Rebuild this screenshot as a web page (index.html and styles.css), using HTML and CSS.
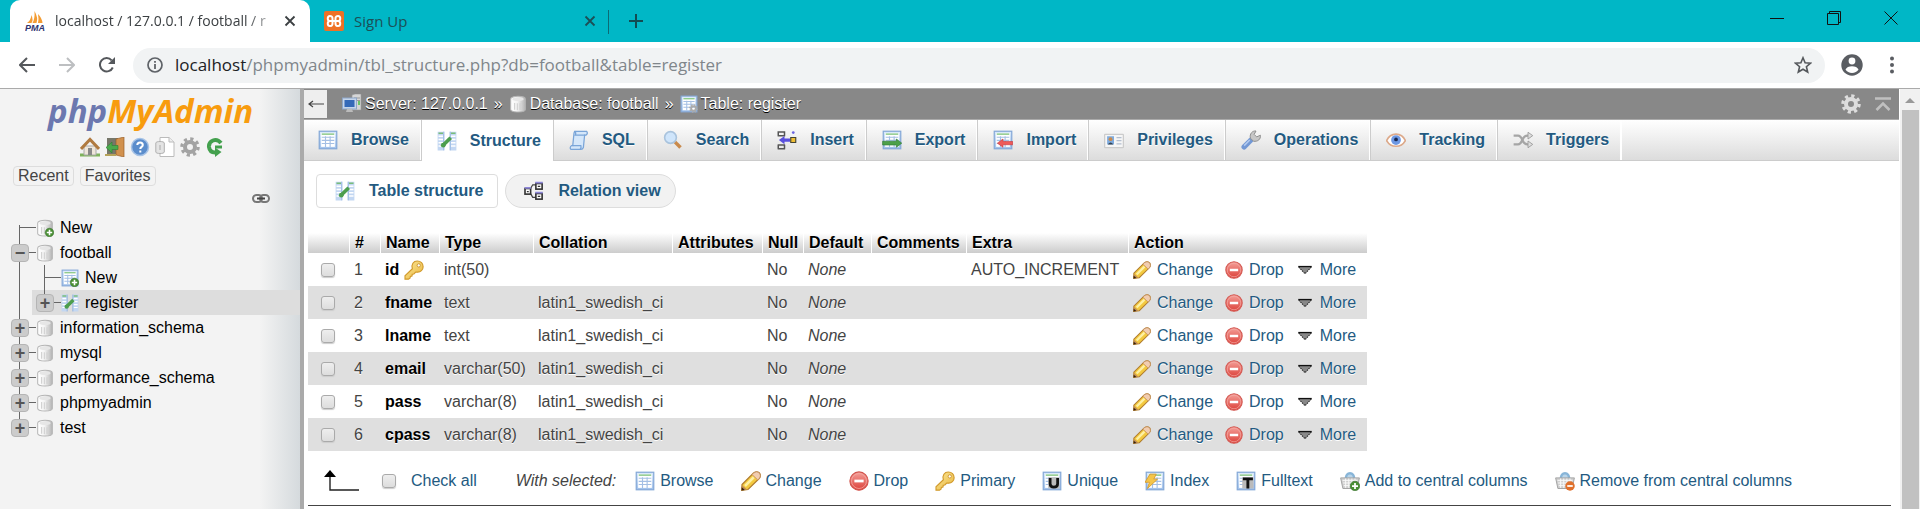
FILE: index.html
```html
<!DOCTYPE html>
<html lang="en">
<head>
<meta charset="utf-8">
<title>localhost / 127.0.0.1 / football / register</title>
<link rel="stylesheet" href="styles.css">
</head>
<body>
<svg class="defs" aria-hidden="true">
  <defs>
    <linearGradient id="g-cyl" x1="0" x2="1"><stop offset="0" stop-color="#fff"/><stop offset=".45" stop-color="#f4f4f4"/><stop offset="1" stop-color="#b4b4b4"/></linearGradient>
    <linearGradient id="g-blue" x1="0" y1="0" x2="0" y2="1"><stop offset="0" stop-color="#dcebfb"/><stop offset="1" stop-color="#9fc0ea"/></linearGradient>
    <linearGradient id="g-red" x1="0" y1="0" x2="0" y2="1"><stop offset="0" stop-color="#f4a09a"/><stop offset="1" stop-color="#dc4038"/></linearGradient>
    <linearGradient id="g-gold" x1="0" y1="0" x2="1" y2="1"><stop offset="0" stop-color="#fbe89a"/><stop offset="1" stop-color="#e9b53c"/></linearGradient>
    <symbol id="i-plus" viewBox="0 0 16 16"><circle cx="12" cy="12" r="3.8" fill="#4a8f34" stroke="#35702a" stroke-width=".5"/><path d="M12 9.600v4.800M9.600 12h4.800" stroke="#fff" stroke-width="1.400"/></symbol>
    <symbol id="i-db" viewBox="0 0 16 16"><path d="M1.500 3.500C1.500.4 14.500.4 14.500 3.500v9.400c0 3-13 3-13 0z" fill="url(#g-cyl)" stroke="#b5b5b5" stroke-width=".9"/><ellipse cx="8" cy="3.700" rx="5" ry="1.700" fill="#e6e6e6"/><path d="M5 7v6M7.400 7.300v6.200M9.800 7.300v6" stroke="#d0d0d0"/></symbol>
    <symbol id="i-table" viewBox="0 0 16 16"><rect x="1" y="1" width="14" height="14" fill="url(#g-blue)" stroke="#86a9d8"/><rect x="2.500" y="2.500" width="11" height="11" fill="#fff"/><path d="M3 3.300h10" stroke="#8cc98a" stroke-width="1.200"/><path d="M3 5.800h10M3 8.300h10M3 10.800h10M6 5v8.500M9.700 5v8.500" stroke="#a4bfe4" stroke-width=".9"/></symbol>
    <symbol id="i-struct" viewBox="0 0 16 16"><path d="M.5.5h5v15h-5zM10.500.5h5v15h-5z" fill="#c3d7f2"/><path d="M1.200 1.800h3.600M11.200 1.800h3.600" stroke="#79bd7a" stroke-width="1.200"/><path d="M1.200 4.200h3.600M1.200 6.800h3.600M1.200 9.400h3.600M1.200 12h3.600M11.200 4.200h3.600M11.200 6.800h3.600M11.200 9.400h3.600M11.200 12h3.600" stroke="#fff" stroke-width="1.100"/><path d="M5.500.5v15M10.500.5v15" stroke="#8fb1df" stroke-width=".8"/><path d="M4.800 11.400 11 5.400" stroke="#4c9e4e" stroke-width="3"/><circle cx="5" cy="11.300" r="1.900" fill="#4c9e4e"/></symbol>
    <symbol id="i-key" viewBox="0 0 16 16"><path d="M10.600.8c2.800 0 4.800 2 4.700 4.600 0 2.600-2 4.400-4.600 4.300l-1.300-.1-1.500 1.600-1.300.2-.2 1.500-1.300.3-.3 1.400-1.200.7H.8v-2.700l5.900-5.600C5.600 3.500 7.600.8 10.600.8z" fill="url(#g-gold)" stroke="#d19a2c" stroke-width=".9"/><circle cx="11.800" cy="4.300" r="1.300" fill="#fff" stroke="#c98f2a" stroke-width=".7"/></symbol>
    <symbol id="i-pencil" viewBox="0 0 16 16"><path d="M.8 10.800 10 1.600Q12.600-.3 14.800 1.600 16.400 4 14.600 6L5.600 14.800.5 15.500z" fill="#f3c93f" stroke="#b07c2e" stroke-width=".9"/><path d="m10 1.600q2.600-1.900 4.800 0 1.600 2.400-.2 4.400l-1.200 1.100-4.600-4.300z" fill="#f1cdb0" stroke="#c08a5c" stroke-width=".6"/><path d="m3.200 12 7-7" stroke="#fdf0a4" stroke-width="2"/><path d="M.8 11.300 4.800 14.800.5 15.500z" fill="#c08c55"/><path d="m.6 13 2.400 2.200-2.500.4z" fill="#33220f"/></symbol>
    <symbol id="i-drop" viewBox="0 0 16 16"><circle cx="8" cy="8" r="7.300" fill="url(#g-red)" stroke="#d2564f" stroke-width=".9"/><circle cx="8" cy="8" r="6" fill="none" stroke="#f3aaa4" stroke-width=".6"/><path d="M4.300 8h7.400" stroke="#fff" stroke-width="2.200"/></symbol>
    <symbol id="i-more" viewBox="0 0 16 16"><path d="M2.500 5.500h11L8 11.300z" fill="#888"/><path d="M2 5h12" stroke="#111" stroke-width="1.300"/><path d="M2.500 5.500 8 11.300l5.500-5.800" fill="none" stroke="#222" stroke-dasharray="1.300 .8" stroke-width=".9"/></symbol>
    <symbol id="i-gear" viewBox="0 0 16 16"><circle cx="8" cy="8" r="6.500" fill="none" stroke="currentColor" stroke-width="2.600" stroke-dasharray="2.550 2.550"/><circle cx="8" cy="8" r="4" fill="none" stroke="currentColor" stroke-width="3.200"/></symbol>
    <symbol id="i-basket" viewBox="0 0 16 16"><path d="M4.500 7C4.500 0 11.500 0 11.500 7" fill="#b9d5ea" stroke="#88b5d8" stroke-width="2"/><path d="M.5 5.500h15l-1.800 8.500H2.300z" fill="#cfcfcf" stroke="#a5a5a5" stroke-width=".8"/><path d="M2 7.500h12M2.500 9.600h11M3 11.700h10M4.500 6v7.500M7 6v7.500M9.500 6v7.500M12 6v7.500" stroke="#f8f8f8" stroke-width=".8"/></symbol>
    <symbol id="i-x" viewBox="0 0 16 16"><path d="m3.500 3.500 9 9m0-9-9 9" stroke="currentColor" stroke-width="1.800"/></symbol>
  </defs>
</svg>

<header class="browser">
  <div class="tabstrip">
    <div class="tab tab-active">
      <svg class="favicon" viewBox="0 0 20 20"><path d="M2 12q4-3 4.500-8 2 5 0 8zM7.500 12q2.500-4 2-12 4 7 2 12zM13 12q1-4 0-9 4 4 4.500 9z" fill="#f39c33"/><text x="0" y="19.500" class="pma">PMA</text></svg>
      <span class="tab-title">localhost / 127.0.0.1 / football / r</span>
      <button class="plain close" aria-label="Close tab"><svg class="ic16"><use href="#i-x"/></svg></button>
    </div>
    <div class="tab tab-rest">
      <svg class="favicon" viewBox="0 0 20 20"><rect width="20" height="20" rx="2" fill="#ef7125"/><path d="M7 10H6C3 10 3 5 6 5s2.500 2.500 2.500 5S9 15 6 15s-3-5 0-5h8c3 0 3-5 0-5s-2.500 2.500-2.500 5-.5 5 2.500 5 3-5 0-5" fill="none" stroke="#fff" stroke-width="2"/></svg>
      <span class="tab-title">Sign Up</span>
      <button class="plain close" aria-label="Close tab"><svg class="ic16"><use href="#i-x"/></svg></button>
    </div>
    <button class="plain newtab" aria-label="New tab"><svg class="ic16" viewBox="0 0 16 16"><path d="M8 1v14M1 8h14" stroke="#124c53" stroke-width="2"/></svg></button>
    <div class="winctl">
      <button class="plain" aria-label="Minimize"><svg class="ic14" viewBox="0 0 14 14"><path d="M0 7.500h14" stroke="#111"/></svg></button>
      <button class="plain" aria-label="Restore"><svg class="ic14" viewBox="0 0 14 14"><path d="M.5 2.500h11v11H.500zM2.500 2.500v-2h11V11.500h-2" fill="none" stroke="#111"/></svg></button>
      <button class="plain" aria-label="Close"><svg class="ic14" viewBox="0 0 14 14"><path d="m.5.5 13 13m0-13-13 13" stroke="#111"/></svg></button>
    </div>
  </div>
  <div class="toolbar">
    <div class="navbtns">
      <button class="plain" aria-label="Back"><svg class="ic16" viewBox="0 0 16 16"><path d="M16 8H1M8 1 1 8l7 7" fill="none" stroke="#55585c" stroke-width="2"/></svg></button>
      <button class="plain" aria-label="Forward"><svg class="ic16" viewBox="0 0 16 16"><path d="M0 8h15M8 1l7 7-7 7" fill="none" stroke="#bdbfc1" stroke-width="2"/></svg></button>
      <button class="plain" aria-label="Reload"><svg class="ic16" viewBox="0 0 16 16"><path d="M13.800 10.500A6.700 6.700 0 1 1 12.700 3.300" fill="none" stroke="#55585c" stroke-width="2"/><path d="M16 0v7H9z" fill="#55585c"/></svg></button>
    </div>
    <div class="omnibox">
      <svg class="ic16" viewBox="0 0 16 16"><circle cx="8" cy="8" r="7" fill="none" stroke="#5f6368" stroke-width="1.700"/><path d="M8 7v5M8 4v1.800" stroke="#5f6368" stroke-width="1.800"/></svg>
      <span class="url"><b>localhost</b>/phpmyadmin/tbl_structure.php?db=football&amp;table=register</span>
      <button class="plain" aria-label="Bookmark"><svg class="ic18" viewBox="0 0 18 18"><path d="m9 1.800 2.100 5 5.400.4-4.100 3.500 1.300 5.300L9 13.200 4.300 16l1.300-5.300-4.100-3.500 5.400-.4z" fill="none" stroke="#55585c" stroke-width="1.600"/></svg></button>
    </div>
    <button class="plain" aria-label="Profile"><svg class="ic22" viewBox="0 0 22 22"><circle cx="11" cy="11" r="10.700" fill="#5a5d62"/><circle cx="11" cy="7" r="3.400" fill="#fff"/><path d="M4.500 15.500c1.500-4.500 11.500-4.500 13 0-2.500 4.500-10.500 4.500-13 0z" fill="#fff"/></svg></button>
    <button class="plain dots" aria-label="Menu"><svg class="ic18" viewBox="0 0 18 18"><g fill="#5a5d62"><circle cx="9" cy="2.500" r="2"/><circle cx="9" cy="9" r="2"/><circle cx="9" cy="15.500" r="2"/></g></svg></button>
  </div>
</header>

<div class="page">
  <aside class="sidebar">
    <div class="logo"><span class="logo-php">php</span><span class="logo-ma">MyAdmin</span></div>
    <nav class="quick">
      <a href="#" aria-label="Home"><svg class="ic20" viewBox="0 0 20 20"><path d="M0 18h20" stroke="#7eb35c" stroke-width="3"/><path d="M4 9h12v9H4z" fill="#eee6da" stroke="#aaa"/><path d="M8 11h4v7H8z" fill="#888"/><path d="m1 12 9-9.500L19 12" fill="none" stroke="#b07a40" stroke-width="3"/></svg></a>
      <a href="#" aria-label="Log out"><svg class="ic20" viewBox="0 0 20 20"><path d="M2 1h11v16H2z" fill="#77776a"/><path d="M11 2l8-2v20l-8-2z" fill="#d1914e" stroke="#99602a" stroke-width=".7"/><path d="M0 17h11v2H0z" fill="#b6a35b"/><path d="M1 10.500 7 5v3.500h6v4H7V16z" fill="#4aaa4c" stroke="#2d7d34" stroke-width=".6"/></svg></a>
      <a href="#" aria-label="Documentation"><svg class="ic20" viewBox="0 0 20 20"><circle cx="10" cy="10" r="8.500" fill="#5b8dcc" stroke="#a7c3e6" stroke-width="1.500"/><path d="M7.300 8c0-3.500 5.500-3.500 5.500 0 0 2-2.500 1.800-2.500 4M10.300 13.500v2" fill="none" stroke="#fff" stroke-width="2"/></svg></a>
      <a href="#" aria-label="phpMyAdmin docs"><svg class="ic20" viewBox="0 0 20 20"><path d="M5 .5h9l5 4.500v14.500H5z" fill="#fff" stroke="#bbb"/><path d="M14 .5V5h5" fill="#eee" stroke="#bbb"/><path d="M.8 6c0-2 8.500-2 8.500 0v9c0 2-8.500 2-8.500 0z" fill="#e4e4e4" stroke="#b0b0b0"/><path d="M5 8v5" stroke="#aaa"/></svg></a>
      <a href="#" class="gear-side" aria-label="Settings"><svg class="ic20"><use href="#i-gear"/></svg></a>
      <a href="#" aria-label="Reload"><svg class="ic20" viewBox="0 0 20 20"><path d="M16 6C11 0 3.500 4 4 10c.5 3.500 3 5.500 6 5.500" fill="none" stroke="#43a04d" stroke-width="4"/><path d="M10 10.500 16.500 15 10 20z" fill="#43a04d"/><path d="M10 10h7" stroke="#43a04d" stroke-width="3"/></svg></a>
    </nav>
    <div class="recents"><button class="pill">Recent</button><button class="pill">Favorites</button></div>
    <div class="linkrow"><svg class="chain" viewBox="0 0 18 10"><rect x="1" y="1" width="9" height="7" rx="3.500" fill="none" stroke="#777" stroke-width="2"/><rect x="8" y="1" width="9" height="7" rx="3.500" fill="none" stroke="#777" stroke-width="2"/><path d="M5 4.500h8" stroke="#444" stroke-width="2"/></svg></div>
    <ul class="tree">
      <li class="leaf first"><span class="node"><i class="elbow"></i><svg class="ic18"><use href="#i-db"/><use href="#i-plus"/></svg><a href="#">New</a></span></li>
      <li><span class="node"><button class="toggle" aria-label="Collapse">−</button><i class="dash"></i><svg class="ic18"><use href="#i-db"/></svg><a href="#">football</a></span>
        <ul class="subtree">
          <li class="leaf"><span class="node"><i class="elbow"></i><svg class="ic18"><use href="#i-table"/><use href="#i-plus"/></svg><a href="#">New</a></span></li>
          <li class="current"><span class="node"><button class="toggle" aria-label="Expand">+</button><i class="dash"></i><svg class="ic18"><use href="#i-struct"/></svg><a href="#">register</a></span></li>
        </ul>
      </li>
      <li><span class="node"><button class="toggle" aria-label="Expand">+</button><i class="dash"></i><svg class="ic18"><use href="#i-db"/></svg><a href="#">information_schema</a></span></li>
      <li><span class="node"><button class="toggle" aria-label="Expand">+</button><i class="dash"></i><svg class="ic18"><use href="#i-db"/></svg><a href="#">mysql</a></span></li>
      <li><span class="node"><button class="toggle" aria-label="Expand">+</button><i class="dash"></i><svg class="ic18"><use href="#i-db"/></svg><a href="#">performance_schema</a></span></li>
      <li><span class="node"><button class="toggle" aria-label="Expand">+</button><i class="dash"></i><svg class="ic18"><use href="#i-db"/></svg><a href="#">phpmyadmin</a></span></li>
      <li class="last"><span class="node"><button class="toggle" aria-label="Expand">+</button><i class="dash"></i><svg class="ic18"><use href="#i-db"/></svg><a href="#">test</a></span></li>
    </ul>
  </aside>

  <main class="main">
    <div class="crumbs">
      <button class="collapse" aria-label="Hide panel"><svg class="ic16" viewBox="0 0 16 16"><path d="M1 8h15M5 5 1 8l4 3" fill="none" stroke="#444" stroke-width="1.200"/></svg></button>
      <svg class="ic20 crumb-server" viewBox="0 0 20 20"><path d="M10 1l3-1h6v16h-9z" fill="#d6d6d6" stroke="#999" stroke-width=".6"/><path d="M12 4h6M12 6.500h6" stroke="#999"/><rect x=".5" y="4" width="14" height="11" fill="#c5d5ea" stroke="#8ea6c8"/><rect x="2.500" y="6" width="10" height="7" fill="#3469b8"/><path d="M5 15h5l1 3H4z" fill="#bbb"/><path d="M17 7v4" stroke="#4b4" stroke-width="1.500"/></svg>
      <a href="#">Server: 127.0.0.1</a><span class="sep">»</span>
      <svg class="ic18"><use href="#i-db"/></svg>
      <a href="#">Database: football</a><span class="sep">»</span>
      <svg class="ic18"><use href="#i-table"/><svg x="9" y="9" width="9" height="9" color="#aaa"><use href="#i-gear"/></svg></svg>
      <a href="#">Table: register</a>
      <span class="crumb-tools"><button class="plain gear-top" aria-label="Page settings"><svg class="ic20"><use href="#i-gear"/></svg></button><button class="plain" aria-label="Back to top"><svg class="ic16" viewBox="0 0 16 16"><path d="M0 2.500h16M1.500 14 8 7.500l6.500 6.500" fill="none" stroke="#c0c0c0" stroke-width="2.600"/></svg></button></span>
    </div>
    <nav class="tabs">
      <a href="#"><svg class="ic20"><use href="#i-table"/></svg>Browse</a>
      <a href="#" class="on"><svg class="ic20"><use href="#i-struct"/></svg>Structure</a>
      <a href="#"><svg class="ic20" viewBox="0 0 16 16"><path d="M4.500 1h9.500q1.500 1.500-.3 3H12.500L11.500 14q-.5 1.500-2 1.500H1.500Q.2 14 2 12.500h1L4 2.500z" fill="#d5e7fa" stroke="#7aa5d8"/><path d="M4.500 1Q6 2.500 5 4h8M3 12.500h6.500q.5 1.500-.5 3" fill="none" stroke="#7aa5d8"/></svg>SQL</a>
      <a href="#"><svg class="ic20" viewBox="0 0 16 16"><path d="m9.500 9.500 4.500 4.500" stroke="#c98a4c" stroke-width="2.800"/><circle cx="6" cy="6" r="4.700" fill="#cfe5fb" stroke="#a9c3dd" stroke-width="1.300"/></svg>Search</a>
      <a href="#"><svg class="ic20" viewBox="0 0 16 16"><path d="M.5 1.500h6M.5 4.500h6M.5 12h6M.5 15h6M1 1v3.500M6 1v3.500M1 12v3M6 12v3" stroke="#555" stroke-width="1.200"/><path d="M1.500 8 6 4.800v2h4.500v2.600H6v2z" fill="#5a50dd"/><path d="M11 6h4v4h-4z" fill="#efbe34" stroke="#443" stroke-width=".9"/><circle cx="13" cy="2" r="1.100" fill="#6a64e0"/></svg>Insert</a>
      <a href="#"><svg class="ic20" viewBox="0 0 16 16"><use href="#i-table"/><path d="M.5 9h11V7.200l4.300 3.300-4.300 3.300V12H.500z" fill="#4ca04a" stroke="#2f7a32" stroke-width=".5"/></svg>Export</a>
      <a href="#"><svg class="ic20" viewBox="0 0 16 16"><use href="#i-table"/><path d="M15.800 9.200H8V7.200l-4.500 3.300L8 13.800v-2h7.800z" fill="#ee5a5a" stroke="#c63a3f" stroke-width=".5"/></svg>Import</a>
      <a href="#"><svg class="ic20" viewBox="0 0 16 16"><rect x=".5" y="3.500" width="15" height="10.500" rx=".5" fill="#f6f6f6" stroke="#ccc"/><rect x="2.500" y="5" width="5.500" height="6.500" fill="#7eaadd"/><circle cx="5.200" cy="7.300" r="1.500" fill="#c98a4c"/><path d="M3 11.500q2.200-3 4.500 0z" fill="#345"/><path d="M10 6h4M10 8.500h4M10 11h4" stroke="#b4bfd0"/></svg>Privileges</a>
      <a href="#"><svg class="ic20" viewBox="0 0 16 16"><path d="M8 8 2.500 13.500" stroke="#7398d4" stroke-width="4.200" stroke-linecap="round"/><path d="M7.500 6.500C6.800 3 9 .5 12 .8L10.500 3.500l2 2 3-1.300c.5 3-2 5.300-5.500 4.800z" fill="#c7c7c7" stroke="#8f8f8f" stroke-width=".8"/><path d="M2.500 12.500 7 8" stroke="#b3cbf0" stroke-width="1.200"/></svg>Operations</a>
      <a href="#"><svg class="ic20" viewBox="0 0 16 16"><path d="M.5 8.500C3.500 1.500 12.500 1.500 15.500 8.500 12 14.500 4 14.500.5 8.500z" fill="#fff" stroke="#dca98a" stroke-width="1.300"/><circle cx="8" cy="8" r="3.900" fill="#6d98e4"/><circle cx="8" cy="7.500" r="1.500" fill="#182850"/></svg>Tracking</a>
      <a href="#"><svg class="ic20" viewBox="0 0 16 16"><path d="M.5 4.500h3.500q2 0 3.500 3.500t4 3.500H13M.5 11.500h3.500q2 0 3.500-3.500t4-3.500H13" fill="none" stroke="#a5a5a5" stroke-width="1.800"/><path d="m12 1.800 3.800 2.700L12 7.200zM12 8.800l3.800 2.700-3.800 2.700z" fill="#ddd" stroke="#999" stroke-width=".7"/></svg>Triggers</a>
    </nav>
    <nav class="subtabs">
      <a href="#" class="sub-on"><svg class="ic20"><use href="#i-struct"/></svg>Table structure</a>
      <a href="#"><svg class="ic20" viewBox="0 0 16 16"><path d="M4 8 7 3h3M4 8l3 5h3" fill="none" stroke="#444"/><g fill="#fff" stroke="#333" stroke-width="1.300"><rect x=".8" y="6" width="4.500" height="4.500"/><rect x="9.500" y="2" width="5" height="4.500"/><rect x="9.500" y="10" width="5" height="4.500"/></g><path d="M11 4.300h2M11 12.300h2M2.300 8.500h1.500" stroke="#333"/><path d="M9 1.300h6M9 9.300h6M.5 5.500h5" stroke="#8d86d8" stroke-width="1.500"/></svg>Relation view</a>
    </nav>

    <table class="cols">
      <colgroup><col class="w-check"><col class="w-num"><col class="w-name"><col class="w-type"><col class="w-coll"><col class="w-attr"><col class="w-null"><col class="w-def"><col class="w-comm"><col class="w-extra"><col class="w-act"></colgroup>
      <thead><tr><th></th><th>#</th><th>Name</th><th>Type</th><th>Collation</th><th>Attributes</th><th>Null</th><th>Default</th><th>Comments</th><th>Extra</th><th>Action</th></tr></thead>
      <tbody>
        <tr><td><input type="checkbox" aria-label="Select id"></td><td>1</td><th scope="row"><span class="pk">id <svg class="ic20"><use href="#i-key"/></svg></span></th><td>int(50)</td><td></td><td></td><td>No</td><td><em>None</em></td><td></td><td>AUTO_INCREMENT</td><td><div class="acts"><a href="#"><svg class="ic18"><use href="#i-pencil"/></svg>Change</a><a href="#"><svg class="ic18"><use href="#i-drop"/></svg>Drop</a><a href="#"><svg class="ic18"><use href="#i-more"/></svg>More</a></div></td></tr>
        <tr><td><input type="checkbox" aria-label="Select fname"></td><td>2</td><th scope="row">fname</th><td>text</td><td>latin1_swedish_ci</td><td></td><td>No</td><td><em>None</em></td><td></td><td></td><td><div class="acts"><a href="#"><svg class="ic18"><use href="#i-pencil"/></svg>Change</a><a href="#"><svg class="ic18"><use href="#i-drop"/></svg>Drop</a><a href="#"><svg class="ic18"><use href="#i-more"/></svg>More</a></div></td></tr>
        <tr><td><input type="checkbox" aria-label="Select lname"></td><td>3</td><th scope="row">lname</th><td>text</td><td>latin1_swedish_ci</td><td></td><td>No</td><td><em>None</em></td><td></td><td></td><td><div class="acts"><a href="#"><svg class="ic18"><use href="#i-pencil"/></svg>Change</a><a href="#"><svg class="ic18"><use href="#i-drop"/></svg>Drop</a><a href="#"><svg class="ic18"><use href="#i-more"/></svg>More</a></div></td></tr>
        <tr><td><input type="checkbox" aria-label="Select email"></td><td>4</td><th scope="row">email</th><td>varchar(50)</td><td>latin1_swedish_ci</td><td></td><td>No</td><td><em>None</em></td><td></td><td></td><td><div class="acts"><a href="#"><svg class="ic18"><use href="#i-pencil"/></svg>Change</a><a href="#"><svg class="ic18"><use href="#i-drop"/></svg>Drop</a><a href="#"><svg class="ic18"><use href="#i-more"/></svg>More</a></div></td></tr>
        <tr><td><input type="checkbox" aria-label="Select pass"></td><td>5</td><th scope="row">pass</th><td>varchar(8)</td><td>latin1_swedish_ci</td><td></td><td>No</td><td><em>None</em></td><td></td><td></td><td><div class="acts"><a href="#"><svg class="ic18"><use href="#i-pencil"/></svg>Change</a><a href="#"><svg class="ic18"><use href="#i-drop"/></svg>Drop</a><a href="#"><svg class="ic18"><use href="#i-more"/></svg>More</a></div></td></tr>
        <tr><td><input type="checkbox" aria-label="Select cpass"></td><td>6</td><th scope="row">cpass</th><td>varchar(8)</td><td>latin1_swedish_ci</td><td></td><td>No</td><td><em>None</em></td><td></td><td></td><td><div class="acts"><a href="#"><svg class="ic18"><use href="#i-pencil"/></svg>Change</a><a href="#"><svg class="ic18"><use href="#i-drop"/></svg>Drop</a><a href="#"><svg class="ic18"><use href="#i-more"/></svg>More</a></div></td></tr>
      </tbody>
    </table>

    <div class="bulk">
      <svg class="uparrow" viewBox="0 0 38 22"><path d="M7 3v17h29" fill="none" stroke="#222" stroke-width="1.400"/><path d="m1 7 6-7 6 7z" fill="#000"/></svg>
      <input type="checkbox" id="checkall"><label for="checkall">Check all</label>
      <em>With selected:</em>
      <div class="bulk-acts">
        <button class="plain"><svg class="ic20"><use href="#i-table"/></svg>Browse</button>
        <button class="plain"><svg class="ic20"><use href="#i-pencil"/></svg>Change</button>
        <button class="plain"><svg class="ic20"><use href="#i-drop"/></svg>Drop</button>
        <button class="plain"><svg class="ic20"><use href="#i-key"/></svg>Primary</button>
        <button class="plain"><svg class="ic20" viewBox="0 0 16 16"><use href="#i-table"/><path d="M5 5h9v9H5z" fill="#bbb"/><path d="M6.500 5.500v4.700q0 2.700 3 2.700t3-2.700V5.500" fill="none" stroke="#111" stroke-width="2.200"/></svg>Unique</button>
        <button class="plain"><svg class="ic20" viewBox="0 0 16 16"><use href="#i-table"/><path d="M4 2.500h5L7 6.500h3L2 14l1.500-5H0z" fill="#f5c54a" stroke="#d59c2c" stroke-width=".7"/></svg>Index</button>
        <button class="plain"><svg class="ic20" viewBox="0 0 16 16"><use href="#i-table"/><path d="M5 5h9v9H5z" fill="#bbb"/><path d="M5.500 6.300h8M9.500 6v8" stroke="#111" stroke-width="2.300"/></svg>Fulltext</button>
        <button class="plain"><svg class="ic20"><use href="#i-basket"/><use href="#i-plus"/></svg>Add to central columns</button>
        <button class="plain"><svg class="ic20" viewBox="0 0 16 16"><use href="#i-basket"/><circle cx="12" cy="12" r="3.800" fill="#e0702c"/><path d="M9.800 12h4.400" stroke="#fff" stroke-width="1.400"/></svg>Remove from central columns</button>
      </div>
    </div>
    <hr class="rule">
  </main>
  <div class="scroll"><span class="scroll-up"></span><span class="scroll-thumb"></span></div>
</div>
</body>
</html>
```
FILE: styles.css
```css
* { box-sizing: border-box; }
body { margin: 0; padding: 0 6px 11px 0; background: #fff; color: #444; font: 16px/20px "Liberation Sans", Arial, sans-serif; }
a { color: #235a81; text-decoration: none; }
svg { display: block; flex: none; }
.defs { position: absolute; width: 0; height: 0; }
.ic14 { width: 14px; height: 14px; }
.ic16 { width: 16px; height: 16px; }
.ic18 { width: 18px; height: 18px; }
.ic20 { width: 20px; height: 20px; }
.ic22 { width: 22px; height: 22px; }
.plain { display: flex; align-items: center; border: 0; padding: 0; background: none; font: inherit; color: inherit; }

/* browser frame */
.browser { font-family: "Open Sans", "Noto Sans", sans-serif; border-bottom: 1px solid #aaa; }
.tabstrip { display: flex; height: 42px; padding-left: 10px; background: #00b7c6; color: #1c4f56; }
.tab { display: flex; align-items: center; gap: 10px; width: 300px; padding: 0 12px 0 15px; font-size: 15px; white-space: nowrap; }
.tab-active { background: #fff; border-radius: 10px 10px 0 0; color: #3c4043; font-size: 14px; }
.tab-active .tab-title { -webkit-mask-image: linear-gradient(90deg, #000 190px, transparent 230px); mask-image: linear-gradient(90deg, #000 190px, transparent 230px); }
.tab-rest { position: relative; padding-left: 14px; }
.tab-rest::after { content: ""; position: absolute; right: 1px; top: 10px; height: 24px; border-right: 1px solid #0d6a74; }
.tab-title { flex: 1; min-width: 0; }
.favicon { width: 20px; height: 20px; }
.pma { font: italic bold 9px "Liberation Sans", Arial, sans-serif; fill: #2d3470; }
.newtab { margin-left: 18px; }
.winctl { display: flex; gap: 43px; margin-left: auto; padding: 0 22px 6px 0; }
.toolbar { display: flex; align-items: center; gap: 16px; height: 46px; padding: 0 19px; }
.navbtns { display: flex; gap: 24px; }
.omnibox { display: flex; align-items: center; flex: 1; gap: 12px; height: 35px; margin-left: 2px; padding: 0 13px 0 14px; border-radius: 18px; background: #f1f3f4; }
.url { flex: 1; color: #80868b; font-size: 17px; }
.url b { font-weight: normal; color: #202124; }
.dots { margin-left: 4px; }

/* page frame */
.page { display: flex; align-items: stretch; }
.sidebar { width: 304px; flex: none; border-right: 4px solid #aaa; background: linear-gradient(90deg, #f3f3f3 260px, #d5dadd 300px); }
.logo { padding: 7px 0 0 48px; font: italic bold 33px/30px "Open Sans", sans-serif; white-space: nowrap; }
.logo-php { color: #6c78af; }
.logo-ma { color: #f89c0e; }
.quick { display: flex; gap: 5px; padding: 11px 0 0 80px; }
.gear-side { color: #a3a3a3; }
.recents { display: flex; gap: 6px; padding: 9px 0 0 13px; }
.pill { padding: 0 4px; border: 1px solid #ddd; border-radius: 4px; background: none; color: #444; font: inherit; line-height: 18px; }
.linkrow { display: flex; justify-content: flex-end; padding: 8px 30px 0 0; }
.chain { width: 18px; height: 10px; }
.tree, .subtree { margin: 0; padding: 0; list-style: none; }
.tree { padding: 11px 0 0 11px; }
.tree > li, .subtree > li { background: linear-gradient(#666, #666) 8px 0 / 1px 100% no-repeat; }
.tree > .first { background-position: 8px 100%; background-size: 1px 15px; }
.tree > .last { background-size: 1px 12px; }
.node { display: flex; align-items: center; height: 25px; }
.tree a { color: #000; margin-left: 6px; }
.subtree { padding-left: 25px; }
.elbow { width: 17px; margin-left: 8px; border-top: 1px solid #666; }
.dash { width: 7px; border-top: 1px solid #666; }
.toggle { width: 18px; height: 18px; padding: 0; border: 1px solid #b5b5b5; border-radius: 4px; background: #ccc; color: #555; font: bold 18px/14px "Liberation Sans", Arial, sans-serif; }
.subtree > .current { margin-left: -4px; padding-left: 4px; background: linear-gradient(#666, #666) 12px 0 / 1px 6px no-repeat, #ddd; }

/* server / database / table trail */
.main { flex: 1; min-width: 0; }
.crumbs { display: flex; align-items: center; height: 31px; background: #888; color: #fff; text-shadow: 0 1px 0 #000; border-bottom: 1px solid #aaa; }
.crumbs a { color: #fff; margin-left: 3px; }
.collapse { display: grid; place-items: center; width: 23px; height: 28px; padding: 0; border: 0; background: #eee; }
.crumb-server { margin-left: 15px; }
.sep { margin: 0 6px; }
.crumb-tools { display: flex; align-items: center; gap: 14px; margin-left: auto; padding-right: 8px; }
.gear-top { color: #ddd; }

/* tabs */
.tabs { display: flex; height: 41px; background: linear-gradient(#fff, #dcdcdc); border-bottom: 1px solid #ccc; }
.tabs a { display: flex; align-items: center; gap: 13px; padding: 0 11px 0 15px; border-left: 1px solid #ccc; border-right: 1px solid #fff; font-weight: bold; text-shadow: 0 1px 0 #fff; }
.tabs a:first-child { border-left: 0; padding-left: 14px; }
.tabs .on { background: #fff; margin-bottom: -1px; }
.tabs a:last-child { border-right-width: 2px; }
.subtabs { display: flex; gap: 7px; padding: 13px 12px 0; }
.subtabs a { display: flex; align-items: center; gap: 14px; height: 34px; padding: 0 14px 0 18px; border: 1px solid #ddd; border-radius: 17px; background: #f2f2f2; font-weight: bold; }
.subtabs .sub-on { border-radius: 4px; background: #fff; }

/* column list */
.cols { margin: 25px 0 0 4px; border-collapse: separate; border-spacing: 0; white-space: nowrap; text-shadow: 0 1px 0 #fff; }
.cols th, .cols td { padding: 0 4px; text-align: left; }
.cols thead th { height: 20px; background: linear-gradient(#fff, #ccc); border-right: 1px solid #fff; color: #000; }
.cols thead th + th { padding-left: 5px; }
.cols thead th:last-child { border-right: 0; }
.cols tbody th { color: #000; }
.cols tbody td, .cols tbody th { height: 33px; }
.cols tbody tr:nth-child(even) { background: #dfdfdf; }
.cols td:first-child { padding-left: 13px; }
.pk { display: flex; align-items: center; gap: 5px; }
.w-check { width: 42px; }
.w-num { width: 31px; }
.w-name { width: 59px; }
.w-type { width: 94px; }
.w-coll { width: 139px; }
.w-attr { width: 90px; }
.w-null { width: 41px; }
.w-def { width: 68px; }
.w-comm { width: 95px; }
.w-extra { width: 162px; }
.w-act { width: 238px; }
input[type="checkbox"] { appearance: none; display: block; width: 14px; height: 14px; margin: 0; border: 1px solid #aaa; border-radius: 3px; background: linear-gradient(#eee, #ddd); box-shadow: 0 1px 1px #ccc; }
.acts { display: flex; gap: 12px; }
.acts a { display: flex; align-items: center; gap: 6px; }

/* bulk actions */
.bulk { display: flex; align-items: center; padding: 19px 0 0 19px; text-shadow: 0 1px 0 #fff; white-space: nowrap; }
.bulk label { margin: 0 39px 0 15px; color: #235a81; }
.bulk input { margin-left: 21px; }
.uparrow { width: 38px; height: 22px; }
.bulk-acts { display: flex; gap: 27px; margin-left: 19px; color: #235a81; }
.bulk-acts button { gap: 5px; }
.rule { margin: 13px 8px 3px 4px; border: 0; border-top: 1px solid #444; }

/* scrollbar */
.scroll { display: flex; flex-direction: column; align-items: center; width: 20px; margin-left: 1px; background: #f1f1f1; }
.scroll-up { width: 0; height: 0; margin: 9px 0 7px; border: 5px solid transparent; border-top: 0; border-bottom-color: #999; }
.scroll-thumb { flex: 1; width: 17px; background: #c1c1c1; }
```
